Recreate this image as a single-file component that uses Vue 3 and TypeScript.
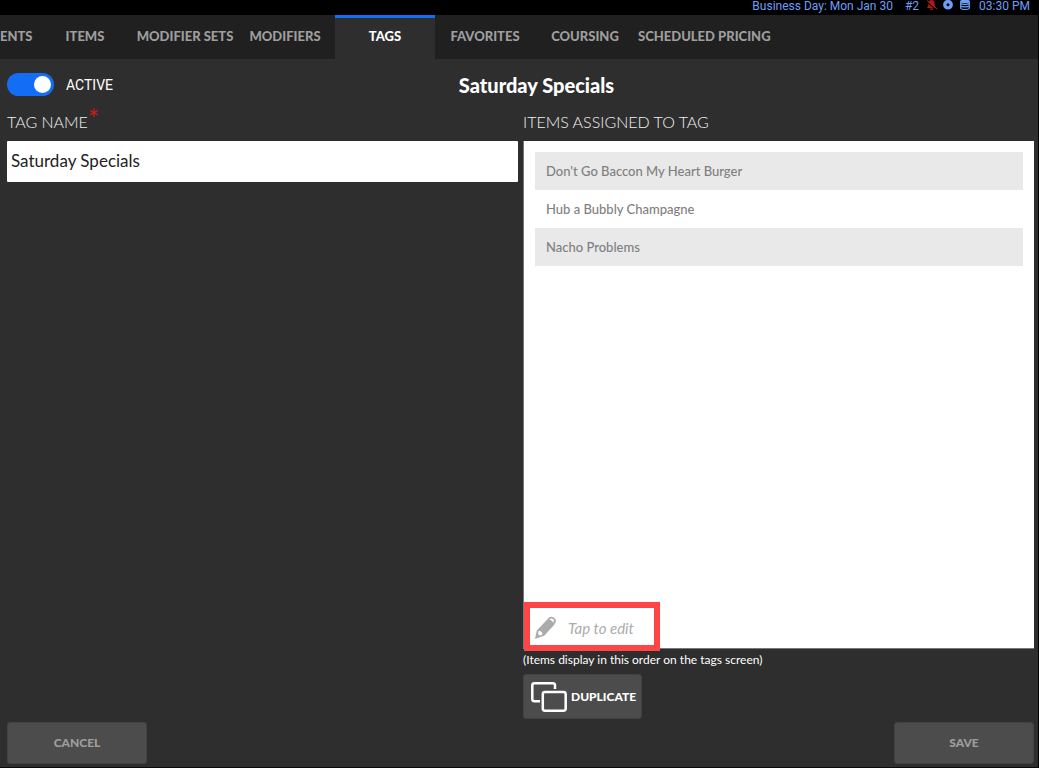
<script setup lang="ts">
import { ref } from 'vue'

const tabs: string[] = [
  'DEPARTMENTS',
  'ITEMS',
  'MODIFIER SETS',
  'MODIFIERS',
  'TAGS',
  'FAVORITES',
  'COURSING',
  'SCHEDULED PRICING',
]
const currentTab = ref('TAGS')
const active = ref(true)
const tagName = ref('Saturday Specials')
const items: string[] = ["Don't Go Baccon My Heart Burger", 'Hub a Bubbly Champagne', 'Nacho Problems']
</script>

<template>
  <div class="screen">
    <header class="status">
      <span class="day">Business Day: Mon Jan 30</span>
      <span class="station">#2</span>
      <svg class="bell" width="12" height="12" viewBox="0 0 12 12" aria-hidden="true">
        <path d="M5.500 0c2 0 3.200 1.400 3.200 3.400V6l1.500 2H.8l1.500-2V3.400C2.300 1.400 3.500 0 5.500 0zM4 8.500h3v1.300H4z" fill="#b01818" />
        <path d="M.5 1.500l10 8.500" stroke="#000" stroke-width="1.200" />
        <path d="M1 .5l10 8.500" stroke="#c01c1c" stroke-width="1" />
      </svg>
      <svg class="disc" width="10" height="10" viewBox="0 0 10 10" aria-hidden="true">
        <circle cx="5" cy="4.700" r="3.200" fill="none" stroke="#6d9ff5" stroke-width="3.400" />
      </svg>
      <svg class="database" width="10" height="11" viewBox="0 0 10 11" fill="none" stroke="#6d9ff5" stroke-width="1.200" aria-hidden="true">
        <ellipse cx="5" cy="1.400" rx="4.300" ry="1.100" fill="#6d9ff5" />
        <path d="M.7 2v1.500c1 1.200 7.600 1.200 8.600 0V2M.7 3.500V6c1 1.200 7.600 1.200 8.600 0V3.500M.7 6v2.500c1 1.300 7.600 1.300 8.600 0V6" />
      </svg>
      <time>03:30 PM</time>
    </header>

    <nav class="tabs">
      <button
        v-for="tab in tabs"
        :key="tab"
        type="button"
        class="tab"
        :class="{ selected: tab === currentTab }"
        @click="currentTab = tab"
      >{{ tab }}</button>
    </nav>

    <main class="content">
      <div class="heading">
        <label class="toggle">
          <input v-model="active" type="checkbox" role="switch">
          <span>ACTIVE</span>
        </label>
        <h1>{{ tagName }}</h1>
      </div>

      <div class="columns">
        <section class="column">
          <label class="caption" for="tag-name">TAG NAME<span class="required">*</span></label>
          <input id="tag-name" v-model="tagName" class="name-input" type="text">
        </section>

        <section class="column">
          <h2 class="caption">ITEMS ASSIGNED TO TAG</h2>
          <div class="panel">
            <ul class="items">
              <li v-for="item in items" :key="item">{{ item }}</li>
            </ul>
            <button class="edit" type="button">
              <svg width="22" height="24" viewBox="0 0 22 24" aria-hidden="true">
                <path d="M0 23l1.800-8.500L12.500 3.200c2.500-3 4.500-3 6.800-1.100 2.300 2 2.200 3.900-.3 6.800L9.200 19.800z" fill="#ababab" />
                <path d="M14.300 3.700c1.200-1.500 2.400-1.700 3.700-.6 1.300 1.100 1.300 2.200.1 3.600-.5-1.700-1.800-2.700-3.800-3z" fill="#fff" />
                <path d="M3.700 14.800c1.800.1 3.700 1.400 3.800 3.400L5 19.700l-2-1.600z" fill="#fff" />
              </svg>
              <span>Tap to edit</span>
            </button>
          </div>
          <p class="note">(Items display in this order on the tags screen)</p>
          <button class="button duplicate" type="button">
            <svg width="36" height="30" viewBox="0 0 36 30" fill="none" stroke="#fff" stroke-width="2.500" aria-hidden="true">
              <path d="M24 7V3.500Q24 1.300 21.800 1.300H3.500Q1.300 1.300 1.300 3.500V17Q1.300 19.300 3.500 19.300H9" />
              <rect x="11.800" y="10" width="22.900" height="18.700" rx="2.200" />
            </svg>
            <span>DUPLICATE</span>
          </button>
        </section>
      </div>
    </main>

    <footer class="actions">
      <button class="button" type="button">CANCEL</button>
      <button class="button" type="button">SAVE</button>
    </footer>
  </div>
</template>

<style>
body {
  margin: 0;
  background: #2e2e2e;
}
</style>

<style scoped>
* {
  box-sizing: border-box;
}

.screen {
  display: flex;
  flex-direction: column;
  min-height: 100vh;
  overflow: hidden;
  background: #2e2e2e;
  border-right: 1px solid #000;
  border-bottom: 1px solid #0c0814;
  color: #fff;
  font-family: Lato, "Open Sans", sans-serif;
}

button,
input {
  font: inherit;
}

button {
  cursor: pointer;
}

.status {
  display: flex;
  justify-content: flex-end;
  height: 15px;
  padding-right: 8px;
  background: #000;
  color: #6d9ff5;
  font: 12px/12px Roboto, sans-serif;
}

.station {
  margin: 0 7px 0 12px;
}

.bell {
  margin-right: 5px;
}

.disc {
  margin-right: 7px;
}

.database {
  margin-right: 9px;
}

.tabs {
  display: flex;
  height: 44px;
  margin-left: -65px;
  background: #202020;
}

.tab {
  flex: none;
  min-width: 100px;
  padding: 0 0 5px;
  border: 0;
  border-top: 3px solid transparent;
  background: transparent;
  color: #9e9e9e;
  font-size: 13px;
  font-weight: 900;
  line-height: 16px;
}

.tab:last-child {
  padding-left: 3px;
}

.tab.selected {
  border-top-color: #146ef5;
  background: #2e2e2e;
  color: #fff;
}

.content {
  display: flex;
  flex: 1;
  flex-direction: column;
  padding: 0 4px 0 7px;
}

.heading {
  display: grid;
  grid-template-columns: 1fr auto 1fr;
  align-items: center;
  height: 51px;
}

.heading h1 {
  margin: 0;
  padding-left: 32px;
  font-size: 20px;
  font-weight: 900;
  line-height: 24px;
}

.toggle {
  display: flex;
  align-items: center;
  gap: 12px;
  font: 14px/20px Roboto, sans-serif;
}

.toggle input {
  width: 47px;
  height: 23px;
  margin: 0;
  padding: 3px;
  appearance: none;
  border-radius: 12px;
  background: #777;
}

.toggle input::before {
  display: block;
  width: 17px;
  height: 17px;
  border-radius: 50%;
  background: #fff;
  content: "";
}

.toggle input:checked {
  background: #146ef5;
}

.toggle input:checked::before {
  margin-left: auto;
}

.columns {
  display: grid;
  flex: 1;
  grid-template-columns: 1fr 1fr;
  gap: 5px;
}

.column {
  display: flex;
  flex-direction: column;
  align-items: stretch;
  min-width: 0;
}

.caption {
  display: flex;
  height: 31px;
  margin: 0;
  color: #f0f0f0;
  font-size: 16px;
  font-weight: 300;
  line-height: 24px;
}

.required {
  color: #d01818;
  font-size: 26px;
  font-weight: 400;
  line-height: 18px;
}

.name-input {
  width: 100%;
  height: 41px;
  padding: 0 4px 2px;
  border: 0;
  border-radius: 1px;
  background: #fff;
  color: #222;
  font-size: 17px;
}

.panel {
  display: flex;
  flex: 1;
  flex-direction: column;
  justify-content: space-between;
  align-items: flex-start;
  border: 1px solid #777;
  border-width: 0 0 1px 1px;
  background: #fff;
}

.items {
  align-self: stretch;
  margin: 0;
  padding: 11px 11px 0;
  list-style: none;
}

.items li {
  padding: 0 11px;
  color: #808080;
  font-size: 13px;
  font-weight: 500;
  line-height: 38px;
}

.items li:nth-child(odd) {
  background: #e9e9e9;
}

.edit {
  display: flex;
  align-items: center;
  gap: 11px;
  width: 136px;
  height: 49px;
  margin-bottom: -3px;
  padding: 3px 5px 0;
  border: 6px solid #ff4545;
  background: #fff;
  color: #ababab;
  font-size: 15px;
  font-style: italic;
}

.note {
  margin: 0;
  padding: 3px 0 6px;
  font-size: 12px;
  line-height: 16px;
}

.button {
  width: 140px;
  height: 42px;
  padding: 0 0 2px;
  border: 1px solid #424242;
  border-radius: 3px;
  background: #4c4c4c;
  color: #9e9e9e;
  font-size: 12px;
  font-weight: 900;
}

.duplicate {
  display: flex;
  align-items: center;
  gap: 4px;
  width: 119px;
  height: 45px;
  padding: 0 0 0 7px;
  color: #fff;
}

.actions {
  display: flex;
  justify-content: space-between;
  padding: 3px 4px 3px 7px;
}
</style>
